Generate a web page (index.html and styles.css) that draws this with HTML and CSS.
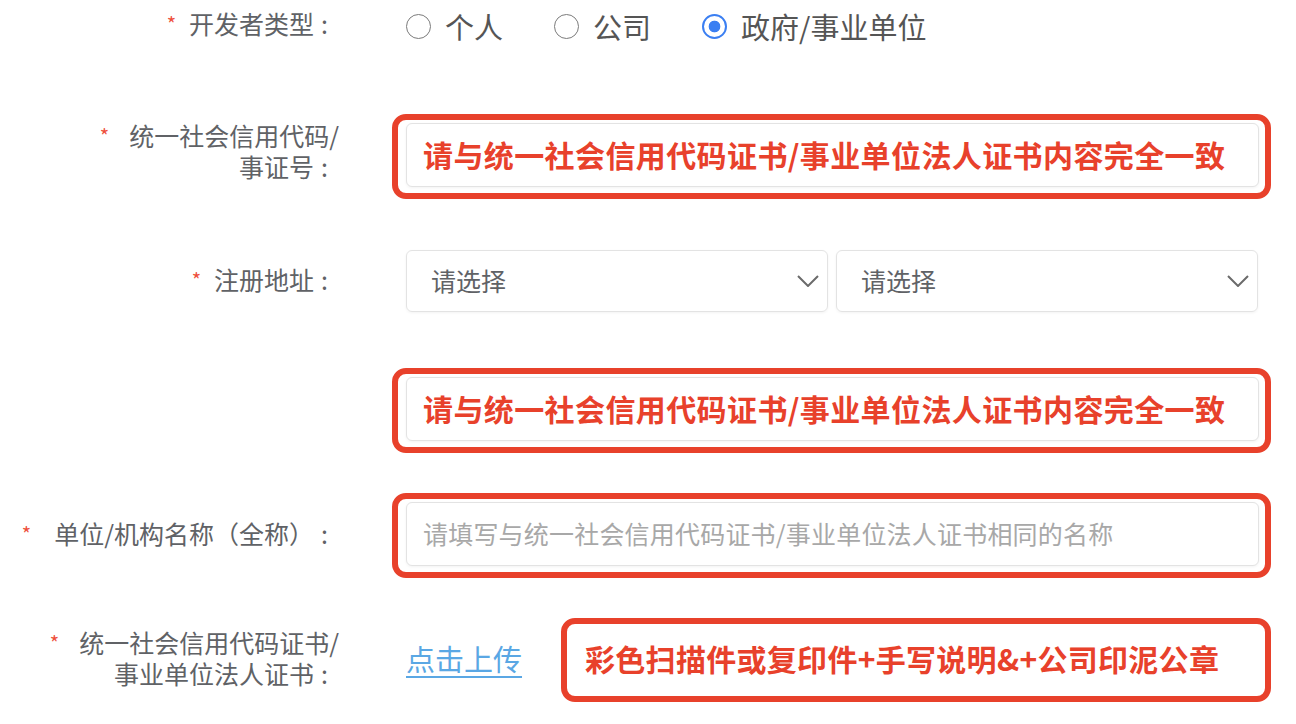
FILE: index.html
```html
<!DOCTYPE html>
<html lang="zh-CN">
<head>
<meta charset="utf-8">
<title>开发者信息</title>
<link rel="stylesheet" href="styles.css">
</head>
<body>
<div class="form">
  <div class="row row-type">
    <div class="label"><span class="req">*</span><span class="label-text">开发者类型<span class="colon">:</span></span></div>
    <div class="radios">
      <label class="radio"><span class="dot"></span>个人</label>
      <label class="radio"><span class="dot"></span>公司</label>
      <label class="radio"><span class="dot on"></span>政府/事业单位</label>
    </div>
  </div>

  <div class="row row-code">
    <div class="label label-up"><span class="req wide">*</span><span class="label-text"><span class="line">统一社会信用代码/</span><span class="line">事证号<span class="colon">:</span></span></span></div>
    <div class="mark">
      <div class="field red">请与统一社会信用代码证书/事业单位法人证书内容完全一致</div>
    </div>
  </div>

  <div class="row row-addr">
    <div class="label"><span class="req">*</span><span class="label-text">注册地址<span class="colon">:</span></span></div>
    <div class="selects">
      <div class="select"><span>请选择</span><svg class="chev" width="22" height="12" viewBox="0 0 22 12"><polyline points="1,1 11,11 21,1" fill="none" stroke="#6b6b6b" stroke-width="2"/></svg></div>
      <div class="select"><span>请选择</span><svg class="chev" width="22" height="12" viewBox="0 0 22 12"><polyline points="1,1 11,11 21,1" fill="none" stroke="#6b6b6b" stroke-width="2"/></svg></div>
    </div>
  </div>

  <div class="row row-detail">
    <div class="label"></div>
    <div class="mark">
      <div class="field red">请与统一社会信用代码证书/事业单位法人证书内容完全一致</div>
    </div>
  </div>

  <div class="row row-name">
    <div class="label"><span class="req wider">*</span><span class="label-text">单位/机构名称（全称）<span class="colon">:</span></span></div>
    <div class="mark">
      <div class="field ph">请填写与统一社会信用代码证书/事业单位法人证书相同的名称</div>
    </div>
  </div>

  <div class="row row-cert">
    <div class="label"><span class="req wide">*</span><span class="label-text"><span class="line">统一社会信用代码证书/</span><span class="line">事业单位法人证书<span class="colon">:</span></span></span></div>
    <div class="upload">
      <a class="link" href="#">点击上传</a>
      <div class="mark note">彩色扫描件或复印件+手写说明&amp;+公司印泥公章</div>
    </div>
  </div>
</div>
</body>
</html>
```

FILE: styles.css
```css
* { box-sizing: border-box; }

body {
  margin: 0;
  background: #ffffff;
  font-family: "Noto Sans CJK SC", "Noto Sans", "Liberation Sans", sans-serif;
}

.form {
  width: 1271px;
  display: flex;
  flex-direction: column;
}

.row {
  display: grid;
  grid-template-columns: 339px 879px;
  column-gap: 53px;
  align-items: center;
}

.row-type { min-height: 51px; }
.row-code { margin-top: 63px; }
.row-addr { margin-top: 51px; }
.row-detail { margin-top: 56px; }
.row-name { margin-top: 40px; }
.row-cert { margin-top: 40px; }

.label {
  display: flex;
  justify-content: flex-end;
  align-items: flex-start;
  font-size: 25px;
  line-height: 31px;
  color: #606266;
  padding-bottom: 4px;
}

.label-up { padding-bottom: 11px; }

.req {
  color: #ee4f3b;
  font-size: 20px;
  line-height: 31px;
  margin-right: 13px;
}
.req.wide { margin-right: 20px; }
.req.wider { margin-right: 23px; }

.label-text { text-align: right; }
.line { display: block; }

.colon {
  display: inline-block;
  width: 1em;
  text-align: left;
  padding-left: 7px;
}

/* radios */
.radios {
  display: flex;
  align-items: center;
  padding-left: 14px;
}

.radio {
  display: flex;
  align-items: center;
  margin-right: 51px;
  font-size: 29px;
  color: #555555;
}

.dot {
  width: 25px;
  height: 25px;
  border: 1.5px solid #7b7b7b;
  border-radius: 50%;
  margin-right: 14px;
  margin-top: 2px;
}

.dot.on {
  border: 2.5px solid #3b7ff2;
  background: radial-gradient(circle, #3b7ff2 0 5.5px, #ffffff 6.2px);
}

/* annotated boxes */
.mark {
  border: 6px solid #e8412b;
  border-radius: 14px;
  padding: 3px 6px 6px 8px;
}

.field {
  height: 64px;
  border: 1px solid #e3e3e3;
  border-radius: 6px;
  box-shadow: 0 1px 3px rgba(0, 0, 0, 0.05);
  display: flex;
  align-items: center;
  padding-left: 16px;
  padding-bottom: 3px;
  background: #ffffff;
}

.field.red {
  color: #e8412b;
  font-weight: 700;
  font-size: 30px;
  letter-spacing: 0.4px;
}

.field.ph {
  color: #a8a8a8;
  font-size: 25px;
  letter-spacing: 0.2px;
}

/* selects */
.selects {
  display: flex;
  gap: 8px;
  padding: 0 13px 0 14px;
}

.select {
  flex: 1;
  height: 62px;
  border: 1px solid #e3e3e3;
  border-radius: 6px;
  box-shadow: 0 1px 3px rgba(0, 0, 0, 0.05);
  display: flex;
  align-items: center;
  justify-content: space-between;
  padding: 0 8px 3px 24px;
  font-size: 25px;
  color: #606266;
}

.chev { margin-top: 3px; }

/* upload */
.upload {
  display: flex;
  align-items: center;
}

.link {
  margin-left: 14px;
  margin-right: 39px;
  font-size: 29px;
  color: #5aa7e4;
  text-decoration: underline;
  text-underline-offset: 5px;
  text-decoration-thickness: 1.5px;
  margin-bottom: 4px;
}

.mark.note {
  flex: 1;
  height: 84px;
  padding: 0 0 4px 18px;
  display: flex;
  align-items: center;
  color: #e8412b;
  font-weight: 700;
  font-size: 30px;
  letter-spacing: 0.3px;
}
```
